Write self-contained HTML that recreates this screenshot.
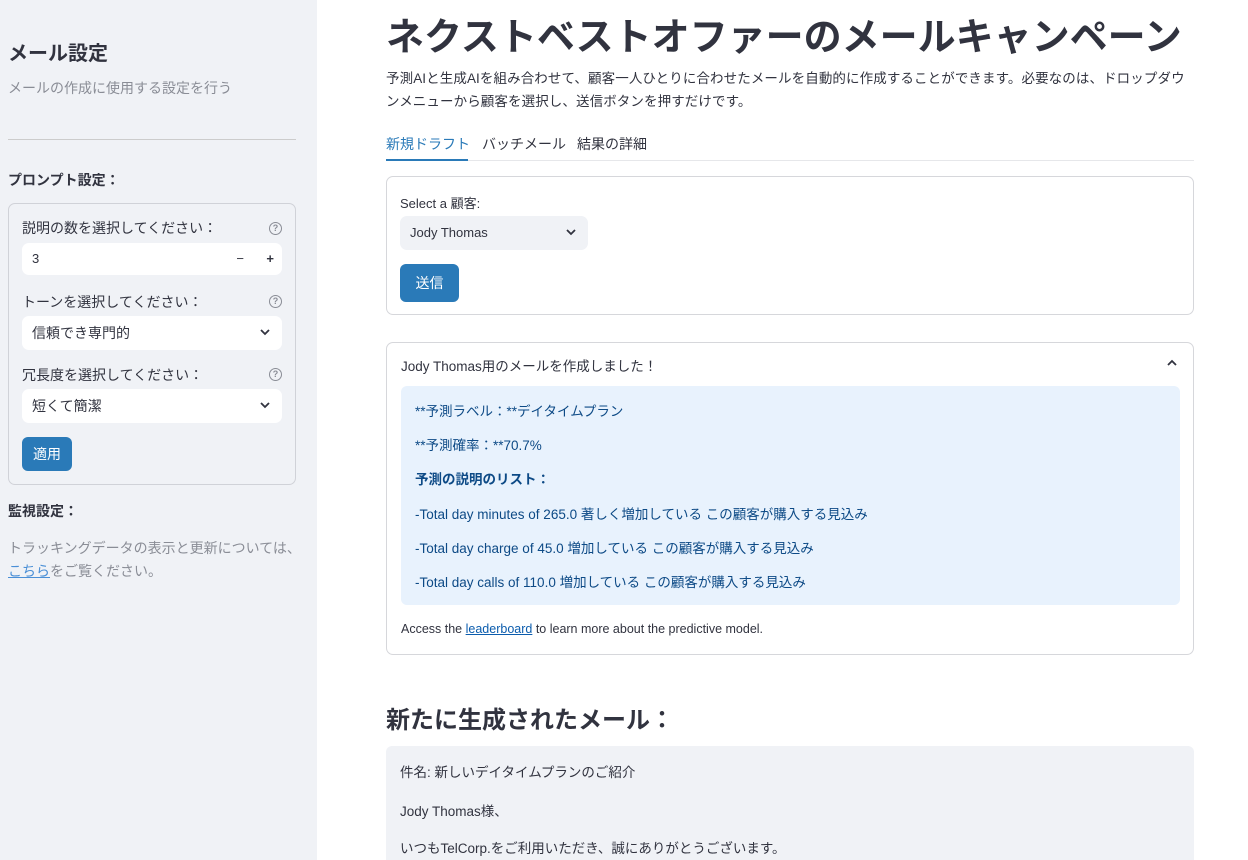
<!DOCTYPE html>
<html><head><meta charset="utf-8"><style>
*{box-sizing:border-box;margin:0;padding:0}
html,body{width:1248px;height:860px;overflow:hidden}
body{background:#fff;font-family:"Liberation Sans","Noto Sans CJK JP",sans-serif;color:#31333f;position:relative}
.sb{position:absolute;left:0;top:0;width:317px;height:860px;background:#f0f2f6}
.abs{position:absolute}
.lbl{font-size:14px;color:#31333f}
.q{position:absolute;width:13px;height:13px;border:1.3px solid #8a8d96;border-radius:50%;font-size:9px;color:#8a8d96;text-align:center;line-height:11px;font-weight:bold}
.inp{position:absolute;background:#fff;border-radius:7px;height:34px;font-size:14px;line-height:34px;padding-left:10px}
.chev{position:absolute;right:12px;top:13px}
.btn{position:absolute;background:#2a7ab8;color:#fff;border-radius:6px;font-size:14px;text-align:center}
.card{position:absolute;border:1px solid #d6d7db;border-radius:7px;background:#fff}
.blue{color:#0d4a86;font-size:13.5px;position:absolute;left:14px}
</style></head><body>
<div class="sb">
<div class="abs" style="left:8px;top:37px;font-size:20px;font-weight:bold">メール設定</div>
<div class="abs" style="left:8px;top:78px;font-size:14px;color:#8a8d96">メールの作成に使用する設定を行う</div>
<div class="abs" style="left:8px;top:139px;width:288px;border-top:1px solid #ccc"></div>
<div class="abs" style="left:8px;top:170px;font-size:14px;font-weight:bold">プロンプト設定：</div>
<div class="abs" style="left:8px;top:203px;width:288px;height:282px;border:1px solid #d0d2d8;border-radius:7px"></div>
<div class="abs lbl" style="left:22px;top:218px">説明の数を選択してください：</div><div class="q" style="left:269px;top:222px">?</div>
<div class="inp" style="left:22px;top:243px;width:260px;height:32px;line-height:32px;font-size:13px">3<span class="abs" style="right:38px;top:0">−</span><span class="abs" style="right:8px;top:0;font-weight:bold">+</span></div>
<div class="abs lbl" style="left:22px;top:292px">トーンを選択してください：</div><div class="q" style="left:269px;top:295px">?</div>
<div class="inp" style="left:22px;top:316px;width:260px">信頼でき専門的<svg class="chev" width="10" height="7" viewBox="0 0 10 7"><polyline points="1,1 5,5 9,1" fill="none" stroke="#31333f" stroke-width="1.8"/></svg></div>
<div class="abs lbl" style="left:22px;top:365px">冗長度を選択してください：</div><div class="q" style="left:269px;top:368px">?</div>
<div class="inp" style="left:22px;top:389px;width:260px">短くて簡潔<svg class="chev" width="10" height="7" viewBox="0 0 10 7"><polyline points="1,1 5,5 9,1" fill="none" stroke="#31333f" stroke-width="1.8"/></svg></div>
<div class="btn" style="left:22px;top:437px;width:50px;height:34px;line-height:34px">適用</div>
<div class="abs" style="left:8px;top:501px;font-size:14px;font-weight:bold">監視設定：</div>
<div class="abs" style="left:8px;top:537px;font-size:14px;color:#8a8d96;line-height:23px">トラッキングデータの表示と更新については、<br><span style="color:#4a8fd6;text-decoration:underline">こちら</span>をご覧ください。</div>
</div>
<div class="abs" style="left:386px;top:6px;font-size:38px;font-weight:bold;color:#31333f;white-space:nowrap">ネクストベストオファーのメールキャンペーン</div>
<div class="abs" style="left:386px;top:67px;width:812px;font-size:13.5px;line-height:23px;letter-spacing:0.1px">予測AIと生成AIを組み合わせて、顧客一人ひとりに合わせたメールを自動的に作成することができます。必要なのは、ドロップダウ<br>ンメニューから顧客を選択し、送信ボタンを押すだけです。</div>
<div class="abs" style="left:386px;top:160px;width:808px;border-top:1px solid #e6e7ea"></div>
<div class="abs" style="left:386px;top:134px;font-size:14px;color:#2a7ab8">新規ドラフト</div>
<div class="abs" style="left:386px;top:159px;width:82px;border-top:2px solid #2a7ab8"></div>
<div class="abs" style="left:482px;top:134px;font-size:14px">バッチメール</div>
<div class="abs" style="left:577px;top:134px;font-size:14px">結果の詳細</div>
<div class="card" style="left:386px;top:176px;width:808px;height:139px">
<div class="abs" style="left:13px;top:16px;font-size:13px">Select a 顧客:</div>
<div class="inp" style="left:13px;top:39px;width:188px;background:#f0f2f6;font-size:13px">Jody Thomas<svg class="chev" width="10" height="7" viewBox="0 0 10 7"><polyline points="1,1 5,5 9,1" fill="none" stroke="#31333f" stroke-width="1.8"/></svg></div>
<div class="btn" style="left:13px;top:87px;width:59px;height:38px;line-height:38px">送信</div>
</div>
<div class="card" style="left:386px;top:342px;width:808px;height:313px">
<div class="abs" style="left:14px;top:12px;font-size:13.5px">Jody Thomas用のメールを作成しました！</div>
<svg class="abs" style="right:16px;top:16px" width="10" height="7" viewBox="0 0 10 7"><polyline points="1,6 5,2 9,6" fill="none" stroke="#31333f" stroke-width="1.8"/></svg>
<div class="abs" style="left:14px;top:43px;width:779px;height:219px;background:#e8f2fd;border-radius:6px">
<div class="blue" style="top:14px">**予測ラベル：**デイタイムプラン</div>
<div class="blue" style="top:48px">**予測確率：**70.7%</div>
<div class="blue" style="top:82px;font-weight:bold">予測の説明のリスト：</div>
<div class="blue" style="top:117px">-Total day minutes of 265.0 著しく増加している この顧客が購入する見込み</div>
<div class="blue" style="top:151px">-Total day charge of 45.0 増加している この顧客が購入する見込み</div>
<div class="blue" style="top:185px">-Total day calls of 110.0 増加している この顧客が購入する見込み</div>
</div>
<div class="abs" style="left:14px;top:279px;font-size:12.5px">Access the <span style="color:#0b5cad;text-decoration:underline">leaderboard</span> to learn more about the predictive model.</div>
</div>
<div class="abs" style="left:386px;top:700px;font-size:24px;font-weight:bold">新たに生成されたメール：</div>
<div class="abs" style="left:386px;top:746px;width:808px;height:114px;background:#f0f2f6;border-radius:6px 6px 0 0;font-size:13.5px">
<div class="abs" style="left:14px;top:15px">件名: 新しいデイタイムプランのご紹介</div>
<div class="abs" style="left:14px;top:54px">Jody Thomas様、</div>
<div class="abs" style="left:14px;top:91px">いつもTelCorp.をご利用いただき、誠にありがとうございます。</div>
</div>
</body></html>
